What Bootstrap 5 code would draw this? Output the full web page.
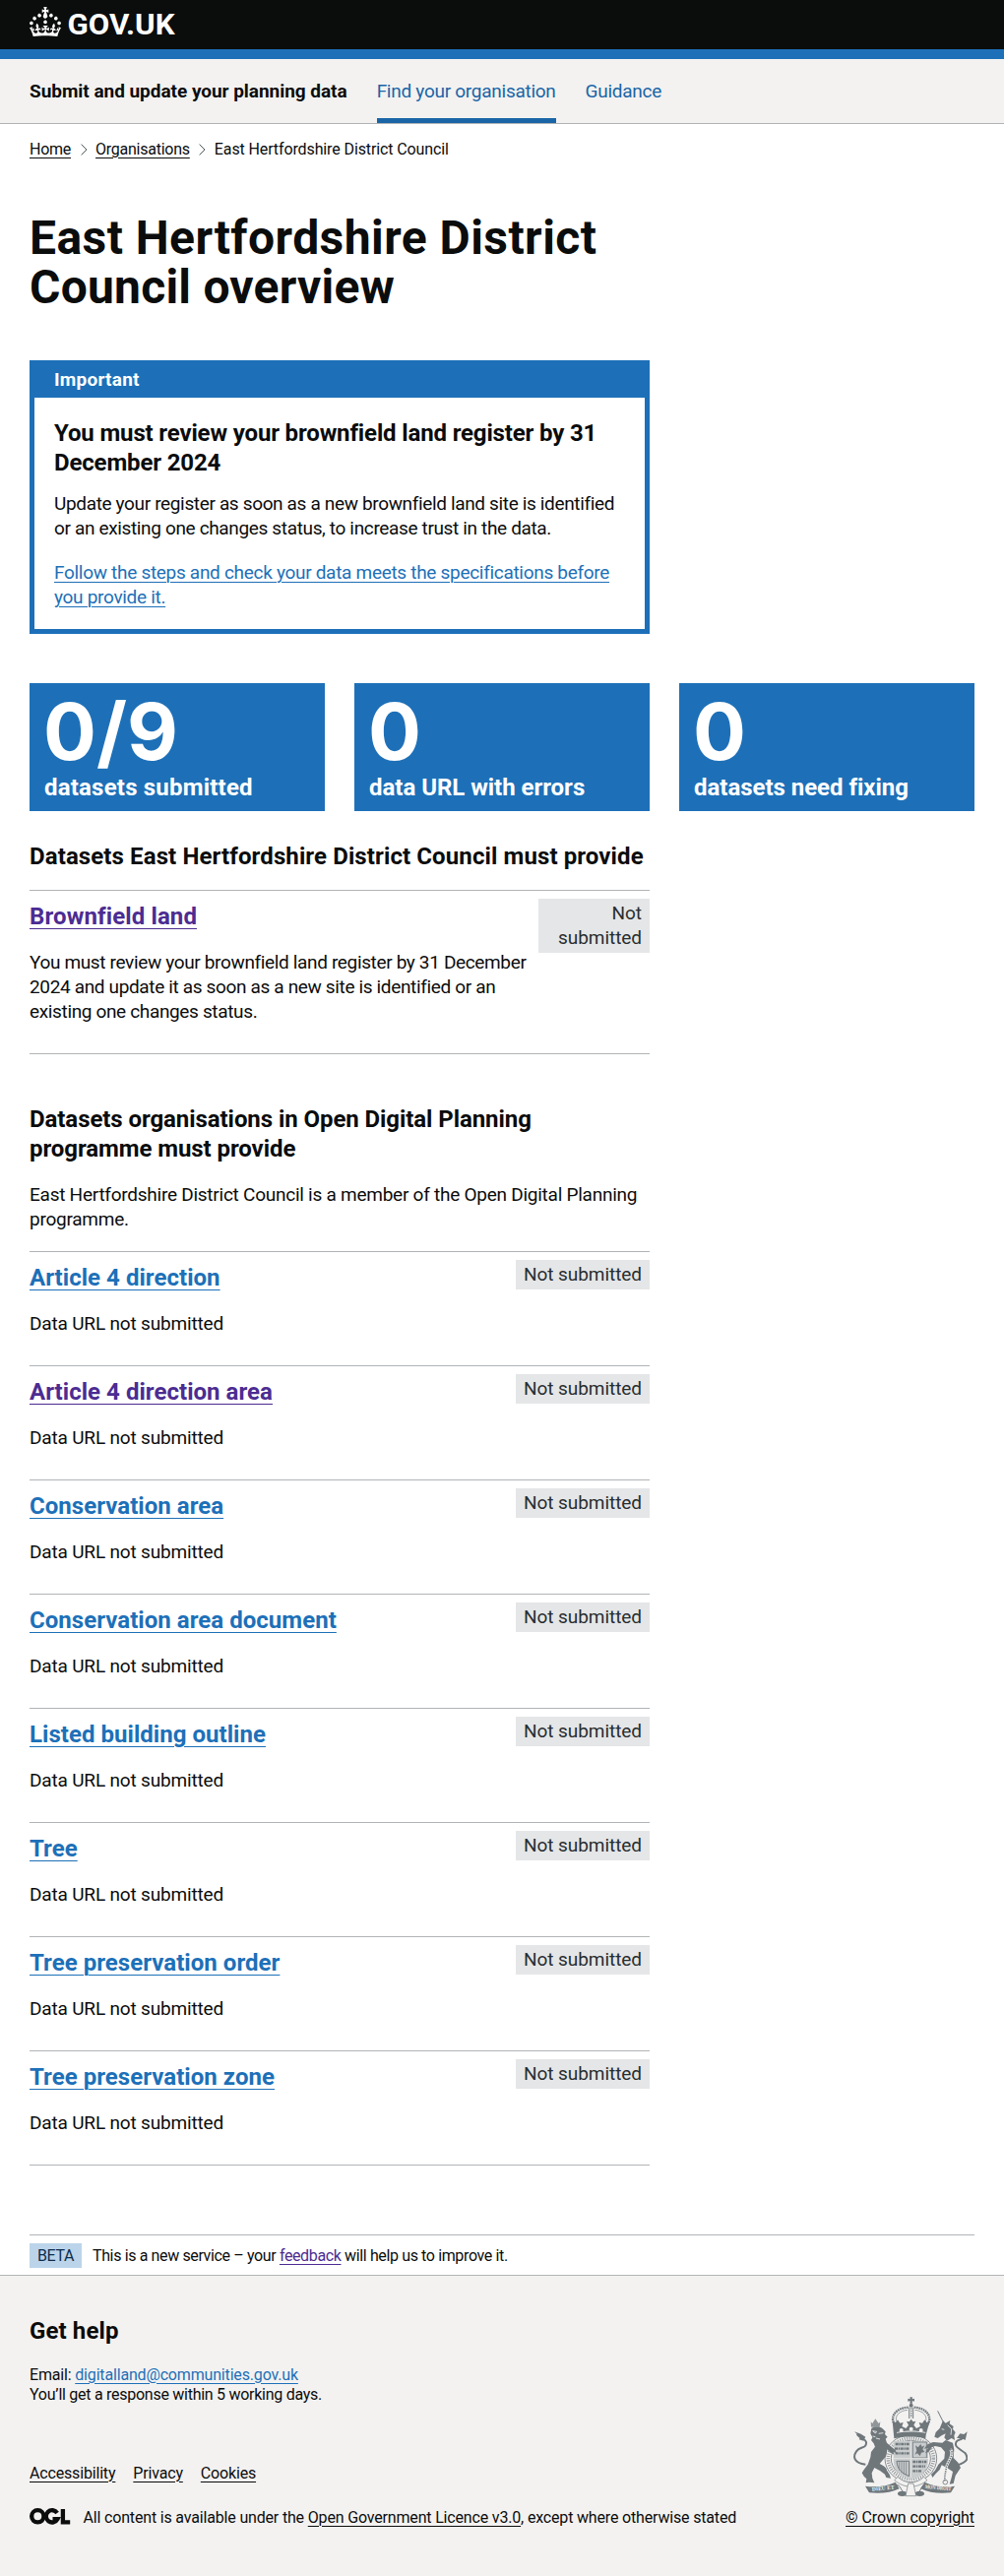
<!DOCTYPE html>
<html lang="en">
<head>
<meta charset="utf-8">
<meta name="viewport" content="width=device-width, initial-scale=1">
<title>East Hertfordshire District Council overview</title>
<link href="https://cdn.jsdelivr.net/npm/bootstrap@5.3.0/dist/css/bootstrap.min.css" rel="stylesheet">
<style>
:root { --ink:#0b0c0c; --brand:#1d70b8; --rule:#b1b4b6; --panel:#f3f2f1; }
body { font-family:Roboto, "Liberation Sans", sans-serif; font-size:19px; line-height:25px; color:var(--ink); background:#fff; letter-spacing:-.3px; }
h1,h2,h3,p,ul { margin:0; padding:0; }
h1,h2,h3 { font-weight:700; }
a { color:var(--brand); text-decoration:underline; text-decoration-thickness:1px; text-underline-offset:.1578em; }
a.seen { color:#4c2c92; }
a.plain { color:var(--ink); }
.page-width { padding-left:30px; padding-right:30px; }
.two-thirds { width:630px; }
.top-bar { background:var(--ink); height:60px; border-bottom:10px solid var(--brand); padding-top:7px; }
.top-bar svg { display:block; overflow:visible; }
.service-nav { background:var(--panel); border-bottom:1px solid var(--rule); height:66px; }
.service-nav nav { gap:30px; }
.service-nav strong { padding-top:20px; letter-spacing:-.035px; }
.service-nav a { padding-top:20px; height:65px; text-decoration:none; color:#1a65a6; letter-spacing:-.27px; }
.service-nav a.current { border-bottom:5px solid #1a65a6; }
.crumbs { font-size:16px; line-height:20px; letter-spacing:-.25px; padding-top:15.5px; }
.crumbs svg { margin:4px 8.5px 0 9.5px; }
.crumbs .here { letter-spacing:-.115px; }
.page-title { font-size:48px; line-height:50px; letter-spacing:.45px; margin-top:55px; }
.page-title span { letter-spacing:.22px; }
.notice { border:5px solid var(--brand); margin-top:49px; }
.notice-head { background:var(--brand); color:#fff; font-weight:700; padding:2px 20px 6px; letter-spacing:.25px; }
.notice-body { padding:21px 20px 20px; }
.title-m { font-size:24px; line-height:30px; letter-spacing:.11px; }
.notice .title-m { letter-spacing:-.15px; margin-bottom:14px; }
.notice p { letter-spacing:-.35px; }
.notice p + p { margin-top:20px; letter-spacing:-.3px; }
.h-first { margin:31px 0 19px; }
.h-second { margin:51px 0 19px; letter-spacing:-.07px; }
.member { margin-bottom:20px; letter-spacing:-.25px; }
.stats { margin-top:50px; gap:30px; }
.stat { background:var(--brand); color:#fff; height:130px; flex:1 1 0; padding:9px 15px 0; font-weight:700; }
.stat .figure-num { font:700 80px/80px Inter, sans-serif; letter-spacing:0; margin-left:-1px; }
.stat .figure-label { font-size:24px; line-height:30px; letter-spacing:-.03px; margin-top:2px; }
.stat:first-child .figure-label { letter-spacing:.2px; }
.task { border-top:1px solid var(--rule); height:116px; padding-top:8px; }
.task-list { border-bottom:1px solid var(--rule); }
.task h3 { font-size:24px; line-height:30px; letter-spacing:.04px; margin-top:3px; }
.task p { margin-top:19px; letter-spacing:-.17px; }
.task.tall { height:166px; }
.task.tall h3 { letter-spacing:.12px; }
.task.tall p { letter-spacing:-.35px; white-space:nowrap; }
.status { background:#e5e6e7; color:#282d30; padding:2px 8px 3px; letter-spacing:-.06px; text-align:right; white-space:nowrap; }
.tall .status { width:113px; white-space:normal; }
.tall .task-text { width:510px; }
.phase { border-top:1px solid var(--rule); margin-top:70px; height:41px; padding-top:8px; font-size:16px; line-height:20px; letter-spacing:-.37px; }
.phase .beta { background:#bbd4ea; color:#0c2d4a; padding:3px 8px 2px; width:53px; letter-spacing:-.35px; margin-right:11px; }
.phase .msg { padding-top:3px; }
footer { background:var(--panel); border-top:1px solid var(--rule); padding-top:41px; height:306px; font-size:16px; line-height:20px; letter-spacing:-.17px; }
.help { margin-top:20px; }
.help .reply { letter-spacing:-.27px; }
.meta-links { gap:18px; margin-top:60px; }
.licence { margin-top:25px; }
.licence svg { margin-right:12.5px; }
.crest { margin:0 7px 10px 0; }
.crown-copy { letter-spacing:-.09px; }
</style>
</head>
<body>
<header>
  <div class="top-bar page-width">
    <svg width="160" height="38" viewBox="0 0 160 38" fill="#fff" role="img" aria-label="GOV.UK">
      <path d="M22.6 10.4c-1 .4-2-.1-2.4-1-.4-.9.1-2 1-2.4.9-.4 2 .1 2.4 1s-.1 2-1 2.4m-5.9 6.7c-.9.4-2-.1-2.4-1-.4-.9.1-2 1-2.4.9-.4 2 .1 2.4 1s-.1 2-1 2.4m10.8-3.7c-1 .4-2-.1-2.4-1-.4-.9.1-2 1-2.4.9-.4 2 .1 2.4 1s0 2-1 2.4m3.3 4.8c-1 .4-2-.1-2.4-1-.4-.9.1-2 1-2.4.9-.4 2 .1 2.4 1s-.1 2-1 2.4M17 4.7l2.3 1.2V2.5l-2.3.7-.2-.2.9-3h-3.4l.9 3-.2.2c-.1.1-2.3-.7-2.3-.7v3.4L15 4.7c.1.1.1.2.2.2l-1.3 4c-.1.2-.1.4-.1.6 0 1.1.8 2 1.9 2.2h.7c1-.2 1.9-1.1 1.9-2.1 0-.2 0-.4-.1-.6l-1.3-4c-.1-.2 0-.2.1-.3m-7.6 5.7c.9.4 2-.1 2.4-1 .4-.9-.1-2-1-2.4-.9-.4-2 .1-2.4 1s0 2 1 2.4m-5 3c.9.4 2-.1 2.4-1 .4-.9-.1-2-1-2.4-.9-.4-2 .1-2.4 1s.1 2 1 2.4m-3.2 4.8c.9.4 2-.1 2.4-1 .4-.9-.1-2-1-2.4-.9-.4-2 .1-2.4 1s0 2 1 2.4m14.8 11c4.4 0 8.6.3 12.3.8 1.1-4.5 2.4-7 3.7-8.8l-2.5-.9c.2 1.3.3 1.9 0 2.7-.4-.4-.8-1.1-1.1-2.3l-1.2 4c.7-.5 1.3-.8 2-.9-1.1 2.5-2.6 3.1-3.5 3-1.1-.2-1.7-1.2-1.5-2.1.3-1.2 1.5-1.5 2.1-.1 1.1-2.3-.8-3-2-2.3 1.9-1.9 2.1-3.5.6-5.6-2.1 1.6-2.1 3.2-1.2 5.5-1.2-1.4-3.2-.6-2.5 1.6.9-1.4 2.1-.5 1.9.8-.2 1.1-1.7 2.1-3.5 1.9-2.7-.2-2.9-2.1-2.9-3.6.7-.1 1.9.5 2.9 1.9l.4-4.3c-1.1 1.1-2.1 1.4-3.2 1.4.4-1.2 2.1-3 2.1-3h-5.4s1.7 1.9 2.1 3c-1.1 0-2.1-.2-3.2-1.4l.4 4.3c1-1.4 2.2-2 2.9-1.9-.1 1.5-.2 3.4-2.9 3.6-1.9.2-3.4-.8-3.5-1.9-.2-1.3 1-2.2 1.9-.8.7-2.3-1.2-3-2.5-1.6.9-2.2.9-3.9-1.2-5.5-1.5 2-1.3 3.7.6 5.6-1.2-.7-3.1 0-2 2.3.6-1.4 1.8-1.1 2.1.1.2.9-.3 1.9-1.5 2.1-.9.2-2.4-.5-3.5-3 .6 0 1.2.3 2 .9l-1.2-4c-.3 1.1-.7 1.9-1.1 2.3-.3-.8-.2-1.4 0-2.7l-2.9.9C1.3 23 2.6 25.5 3.7 30c3.7-.5 7.9-.8 12.3-.8"/>
      <text x="38.5" y="28" font-family="Roboto, sans-serif" font-weight="700" font-size="29.5" letter-spacing="0" textLength="109" lengthAdjust="spacingAndGlyphs">GOV.UK</text>
    </svg>
  </div>
  <div class="service-nav page-width">
    <nav class="d-flex">
      <strong>Submit and update your planning data</strong>
      <a href="#" class="current">Find your organisation</a>
      <a href="#">Guidance</a>
    </nav>
  </div>
</header>

<div class="page-width">
  <nav class="crumbs d-flex">
    <a href="#" class="plain">Home</a>
    <svg width="7" height="12" viewBox="0 0 7 12" fill="none" stroke="#505a5f"><path d="M.6.6 6 6 .6 11.4"/></svg>
    <a href="#" class="plain">Organisations</a>
    <svg width="7" height="12" viewBox="0 0 7 12" fill="none" stroke="#505a5f"><path d="M.6.6 6 6 .6 11.4"/></svg>
    <span class="here">East Hertfordshire District Council</span>
  </nav>

  <main>
    <div class="two-thirds">
      <h1 class="page-title">East Hertfordshire District<br><span>Council overview</span></h1>
      <section class="notice">
        <div class="notice-head">Important</div>
        <div class="notice-body">
          <h3 class="title-m">You must review your brownfield land register by 31<br>December 2024</h3>
          <p>Update your register as soon as a new brownfield land site is identified<br>or an existing one changes status, to increase trust in the data.</p>
          <p><a href="#">Follow the steps and check your data meets the specifications before<br>you provide it.</a></p>
        </div>
      </section>
    </div>

    <div class="stats d-flex">
      <div class="stat"><div class="figure-num">0/9</div><div class="figure-label">datasets submitted</div></div>
      <div class="stat"><div class="figure-num">0</div><div class="figure-label">data URL with errors</div></div>
      <div class="stat"><div class="figure-num">0</div><div class="figure-label">datasets need fixing</div></div>
    </div>

    <div class="two-thirds">
      <h2 class="title-m h-first">Datasets East Hertfordshire District Council must provide</h2>
      <div class="task-list">
        <div class="task tall d-flex justify-content-between align-items-start">
          <div class="task-text"><h3><a href="#" class="seen">Brownfield land</a></h3><p>You must review your brownfield land register by 31 December<br>2024 and update it as soon as a new site is identified or an<br>existing one changes status.</p></div>
          <div class="status">Not submitted</div>
        </div>
      </div>

      <h2 class="title-m h-second">Datasets organisations in Open Digital Planning<br>programme must provide</h2>
      <p class="member">East Hertfordshire District Council is a member of the Open Digital Planning<br>programme.</p>
      <div class="task-list">
        <div class="task d-flex justify-content-between align-items-start"><div><h3><a href="#">Article 4 direction</a></h3><p>Data URL not submitted</p></div><div class="status">Not submitted</div></div>
        <div class="task d-flex justify-content-between align-items-start"><div><h3><a href="#" class="seen">Article 4 direction area</a></h3><p>Data URL not submitted</p></div><div class="status">Not submitted</div></div>
        <div class="task d-flex justify-content-between align-items-start"><div><h3><a href="#">Conservation area</a></h3><p>Data URL not submitted</p></div><div class="status">Not submitted</div></div>
        <div class="task d-flex justify-content-between align-items-start"><div><h3><a href="#">Conservation area document</a></h3><p>Data URL not submitted</p></div><div class="status">Not submitted</div></div>
        <div class="task d-flex justify-content-between align-items-start"><div><h3><a href="#">Listed building outline</a></h3><p>Data URL not submitted</p></div><div class="status">Not submitted</div></div>
        <div class="task d-flex justify-content-between align-items-start"><div><h3><a href="#">Tree</a></h3><p>Data URL not submitted</p></div><div class="status">Not submitted</div></div>
        <div class="task d-flex justify-content-between align-items-start"><div><h3><a href="#">Tree preservation order</a></h3><p>Data URL not submitted</p></div><div class="status">Not submitted</div></div>
        <div class="task d-flex justify-content-between align-items-start"><div><h3><a href="#">Tree preservation zone</a></h3><p>Data URL not submitted</p></div><div class="status">Not submitted</div></div>
      </div>
    </div>
  </main>

  <div class="phase d-flex align-items-start">
    <span class="beta">BETA</span>
    <span class="msg">This is a new service – your <a href="#" class="seen">feedback</a> will help us to improve it.</span>
  </div>
</div>

<footer class="page-width">
  <h2 class="title-m">Get help</h2>
  <div class="d-flex justify-content-between">
    <div class="help">
      <p>Email: <a href="#">digitalland@communities.gov.uk</a><br><span class="reply">You’ll get a response within 5 working days.</span></p>
      <div class="meta-links d-flex">
        <a href="#" class="plain">Accessibility</a><a href="#" class="plain">Privacy</a><a href="#" class="plain">Cookies</a>
      </div>
      <div class="licence d-flex">
        <svg width="42" height="20" viewBox="0 0 42 20" role="img" aria-label="OGL">
          <g fill="none" stroke="#0b0c0c">
            <circle cx="8.3" cy="8.3" r="6.15" stroke-width="4.3"/>
            <path d="M28.1 5A6.15 6.15 0 1 0 28.4 11.2H23.5" stroke-width="4.3"/>
            <path d="M33.9 1v13.4H41.2" stroke-width="4.3"/>
          </g>
        </svg>
        <span>All content is available under the <a href="#" class="plain">Open Government Licence v3.0</a>, except where otherwise stated</span>
      </div>
    </div>
    <div class="d-flex flex-column align-items-end justify-content-end">
      <svg class="crest" width="116" height="103" viewBox="81 74 348 309" fill="#6f777b" stroke="none">
        <!-- crown -->
        <path d="M253 75h8l-1 6 7-2v9l-7-2 1 8h-8l1-8-7 2v-9l7 2z"/>
        <circle cx="257" cy="100" r="6"/>
        <g fill="none" stroke="#6f777b">
          <path d="M207 158C190 135 212 106 250 106M307 158C324 135 302 106 264 106" stroke-width="7" stroke-dasharray="5 2"/>
          <path d="M214 152C204 132 222 116 246 114M300 152C310 132 292 116 268 114" stroke-width="2"/>
          <path d="M251 106v34M263 106v34" stroke-width="3"/>
          <path d="M257 108v30" stroke-width="4" stroke-dasharray="4 3"/>
        </g>
        <path d="M200 148l10 4 6-8 7 10 10-2-4 12 12 6 8-10-6-12 8 2 6-8 6 8 8-2-6 12 8 10 12-6-4-12 10 2 7-10 6 8 10-4-7 24-5 18-1 11c-28-7-66-7-96 0l-1-11z"/>
        <g fill="#f3f2f1"><circle cx="227" cy="176" r="6"/><circle cx="287" cy="176" r="6"/><circle cx="257" cy="172" r="6"/><path d="M213 182c28-6 60-6 88 0v2c-28-5-60-5-88 0z"/></g>
        <!-- garter -->
        <g fill="none" stroke="#6f777b">
          <ellipse cx="256" cy="262" rx="79" ry="72" stroke-width="2.5"/>
          <ellipse cx="256" cy="262" rx="69" ry="62" stroke-width="11" stroke-dasharray="3 4" opacity=".75"/>
          <ellipse cx="256" cy="262" rx="60" ry="55" stroke-width="2.5"/>
        </g>
        <!-- shield -->
        <path d="M203 208h106v60c0 34-28 50-53 58-25-8-53-24-53-58z" fill="#c9cccd"/>
        <g fill="none" stroke="#6f777b" stroke-width="7" stroke-dasharray="9 2 4 2">
          <path d="M209 218h42M207 232h44M209 246h42M262 272h42M262 286h38M262 300h26"/>
        </g>
        <path d="M262 212h42v48h-42z" fill="none" stroke="#6f777b" stroke-width="2.5"/>
        <path d="M270 222l8 6 8-10 4 8 8-4-6 12 6 8-10 2-4 10-8-8-8 4 6-12z"/>
        <path d="M213 270h38v46c-24-10-36-22-38-46z" fill="none" stroke="#6f777b" stroke-width="3"/>
        <path d="M221 272v26M228 272v34M235 272v38M242 272v40" stroke="#6f777b" stroke-width="2"/>
        <path d="M203 262h106M256 208v112" stroke="#e2e3e3" stroke-width="3"/>
        <!-- lion -->
        <path d="M134 150l5 5 5-8 4-6 4 6 6 8 5-5-2 16h-26z" opacity=".75"/>
        <path d="M136 170c8-5 24-6 33 0l10 10-2 8 8 8-6 6 4 12 18 16 8 6 4 10-10-4 2 8-10-6-12-10c2 14-4 26-14 34l-8 10c12 6 22 12 22 20l8 12 4 12-14-2-4-10-14-10-18-10-8 16 2 16 6 14-16-2-10 2 2-12-8-8-6-10 6-10 12-16 8-22 2-16 12-16-4-10-8-10 4-8-6-12z"/>
        <path d="M140 178l12 2-4 5zM158 186l14-2M150 200l12 3M140 194l8 2" stroke="#f3f2f1" stroke-width="2.5"/>
        <path d="M118 280C84 276 78 258 90 240C102 224 122 232 120 212C118 200 104 206 92 188" fill="none" stroke="#6f777b" stroke-width="6"/>
        <path d="M84 180l20 7 14 9-6 12-14-4 4-6z"/>
        <!-- unicorn -->
        <path d="M338 117l17 34" stroke="#6f777b" stroke-width="3"/>
        <path d="M354 146l8 8 14-8-2 10 12 8-2 8 8 10-4 10 2 14-10-6-14 8-8-10 4-12-12 6-12 8-10-4 4-14 12-12z"/>
        <path d="M368 160l12 12-2 18M350 172l8 2" fill="none" stroke="#f3f2f1" stroke-width="2.5"/>
        <path d="M362 206l22 8 4 20-2 26 14 14 8 16-16 24-6 24-12 2 6-20 4-18-18-12-16-8-6 14-12 12-10 12-4-10 12-12 10-18 18-18 2-20-12-14-18-4-10 4-10 14-10 4 8-16-12 2 12-14 16-6 28 2z"/>
        <path d="M376 234c16 12-10 40-12 56s-6 26-4 40" fill="none" stroke="#f3f2f1" stroke-width="8"/>
        <path d="M376 234c16 12-10 40-12 56s-6 26-4 40" fill="none" stroke="#6f777b" stroke-width="5" stroke-dasharray="4 3"/>
        <circle cx="361" cy="334" r="7" fill="none" stroke="#6f777b" stroke-width="2.5"/>
        <path d="M398 282C430 272 432 262 422 246C406 232 388 228 394 212C400 200 414 210 420 190" fill="none" stroke="#6f777b" stroke-width="6"/>
        <path d="M428 180l-10 8-12-2-10 14 14 0 12 6z"/>
        <!-- motto scroll -->
        <path d="M117 346c36 4 66 0 92-12l12 20c-26 12-56 16-92 12zM390 346c-36 4-66 0-92-12l-12 20c26 12 56 16 92 12z"/>
        <path d="M210 344c16-8 16 26 32 24h30c16 2 14-32 30-24" fill="none" stroke="#6f777b" stroke-width="3"/>
        <ellipse cx="230" cy="369" rx="14" ry="8"/><ellipse cx="283" cy="369" rx="14" ry="8"/>
        <path d="M216 318c22 22 58 22 80 0l10 10c-30 26-70 26-100 0z" fill="#f3f2f1" stroke="#6f777b" stroke-width="2"/>
        <path d="M248 338h16l8 38h-32z" fill="#f3f2f1" stroke="#6f777b" stroke-width="2"/>
        <g fill="#f3f2f1" font-family="Liberation Serif, serif" font-weight="700" font-size="17" letter-spacing="0">
          <text transform="translate(138 361) rotate(-5)" textLength="68" lengthAdjust="spacingAndGlyphs">DIEU ET</text>
          <text transform="translate(299 353) rotate(5)" textLength="80" lengthAdjust="spacingAndGlyphs">MON DROIT</text>
        </g>
      </svg>
      <a href="#" class="plain crown-copy">© Crown copyright</a>
    </div>
  </div>
</footer>
<script src="https://cdn.jsdelivr.net/npm/bootstrap@5.3.0/dist/js/bootstrap.bundle.min.js"></script>
</body>
</html>
